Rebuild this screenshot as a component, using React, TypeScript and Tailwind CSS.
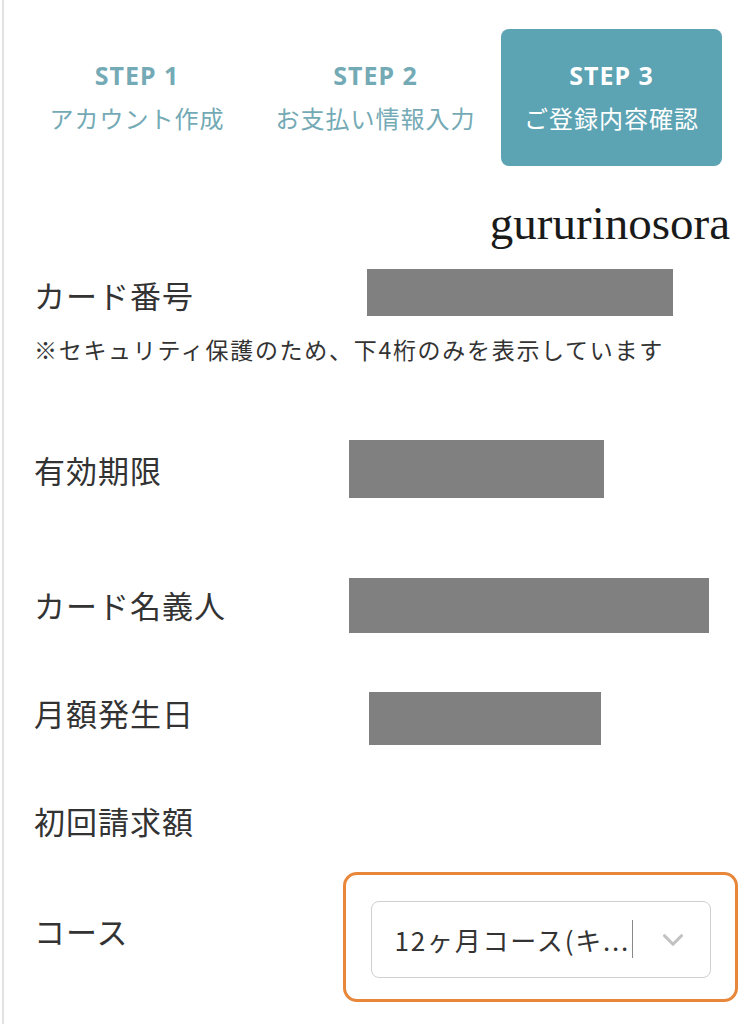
import { ChevronDown } from "lucide-react";

const jp = { fontFamily: '"Noto Sans CJK JP", "Noto Sans", sans-serif' };

function Step({ num, label, active }: { num: number; label: string; active?: boolean }) {
  return (
    <div
      className={
        active
          ? "flex h-full w-[221px] flex-col items-center justify-center rounded-[8px] bg-[#5ca3b3] text-white"
          : "flex h-full flex-col items-center justify-center text-[#74aab5]"
      }
    >
      <span className="text-[25px] leading-[30px] font-bold tracking-[1px]" style={{ fontFamily: '"Noto Sans", sans-serif' }}>
        STEP {num}
      </span>
      <span className="mt-[10px] text-[24px] leading-[36px] tracking-[1px]">{label}</span>
    </div>
  );
}

function Masked({ w, h, ml }: { w: string; h: string; ml: string }) {
  return <div className={`${w} ${h} ${ml} bg-[#808080]`} />;
}

export default function App() {
  return (
    <div className="min-h-[1024px] w-[747px] bg-white text-[#333]" style={jp}>
      <div className="ml-[2px] min-h-[1024px] border-l-2 border-[#e2e2e2]">
        {/* steps */}
        <div className="flex h-[166px] pt-[29px] pl-[20px]">
          <div className="w-[226px]">
            <Step num={1} label="アカウント作成" />
          </div>
          <div className="w-[251px]">
            <Step num={2} label="お支払い情報入力" />
          </div>
          <Step num={3} label="ご登録内容確認" active />
        </div>

        {/* watermark */}
        <div
          className="mt-[34px] h-[46px] pr-[17px] text-right text-[47px] leading-[46px] text-[#1a1a1a]"
          style={{ fontFamily: '"Liberation Serif", serif' }}
        >
          gururinosora
        </div>

        <div className="pl-[30px]">
          <div className="mt-[23px] flex h-[47px] items-center">
            <span className="w-[315px] pt-[6px] text-[31px] tracking-[1px]">カード番号</span>
            <Masked w="w-[306px]" h="h-[47px]" ml="ml-[18px]" />
          </div>
          <p className="mt-[17px] h-[32px] text-[23px] leading-[32px] tracking-[1.7px]">
            ※セキュリティ保護のため、下4桁のみを表示しています
          </p>

          <div className="mt-[75px] flex h-[58px] items-center">
            <span className="w-[315px] pt-[2px] text-[31px] tracking-[1px]">有効期限</span>
            <Masked w="w-[255px]" h="h-[58px]" ml="ml-0" />
          </div>

          <div className="mt-[80px] flex h-[55px] items-center">
            <span className="w-[315px] text-[31px] tracking-[1px]">カード名義人</span>
            <Masked w="w-[360px]" h="h-[55px]" ml="ml-0" />
          </div>

          <div className="mt-[59px] flex h-[53px] items-center">
            <span className="w-[315px] pb-[10px] text-[31px] tracking-[1px]">月額発生日</span>
            <Masked w="w-[232px]" h="h-[53px]" ml="ml-[20px]" />
          </div>

          <div className="mt-[58px] flex h-[40px] items-center">
            <span className="pb-[4px] text-[31px] tracking-[1px]">初回請求額</span>
          </div>

          <div className="mt-[29px] flex h-[130px] items-center">
            <span className="w-[309px] pb-[12px] text-[31px] tracking-[1px]">コース</span>
            <div className="flex h-[130px] w-[395px] items-center justify-center rounded-[14px] border-[3px] border-[#e8873a]">
              <div className="mt-[4px] flex h-[77px] w-[340px] items-center rounded-[8px] border border-[#cfcfcf] pl-[23px] pr-[20px]">
                <span className="text-[26px] tracking-[1.8px] text-[#333]">12ヶ月コース(キ...</span>
                <span className="ml-[2px] h-[38px] w-px bg-[#888]" />
                <ChevronDown className="ml-auto mt-[2px] h-[34px] w-[34px] text-[#c2c2c2]" strokeWidth={2.2} />
              </div>
            </div>
          </div>
        </div>
      </div>
    </div>
  );
}
